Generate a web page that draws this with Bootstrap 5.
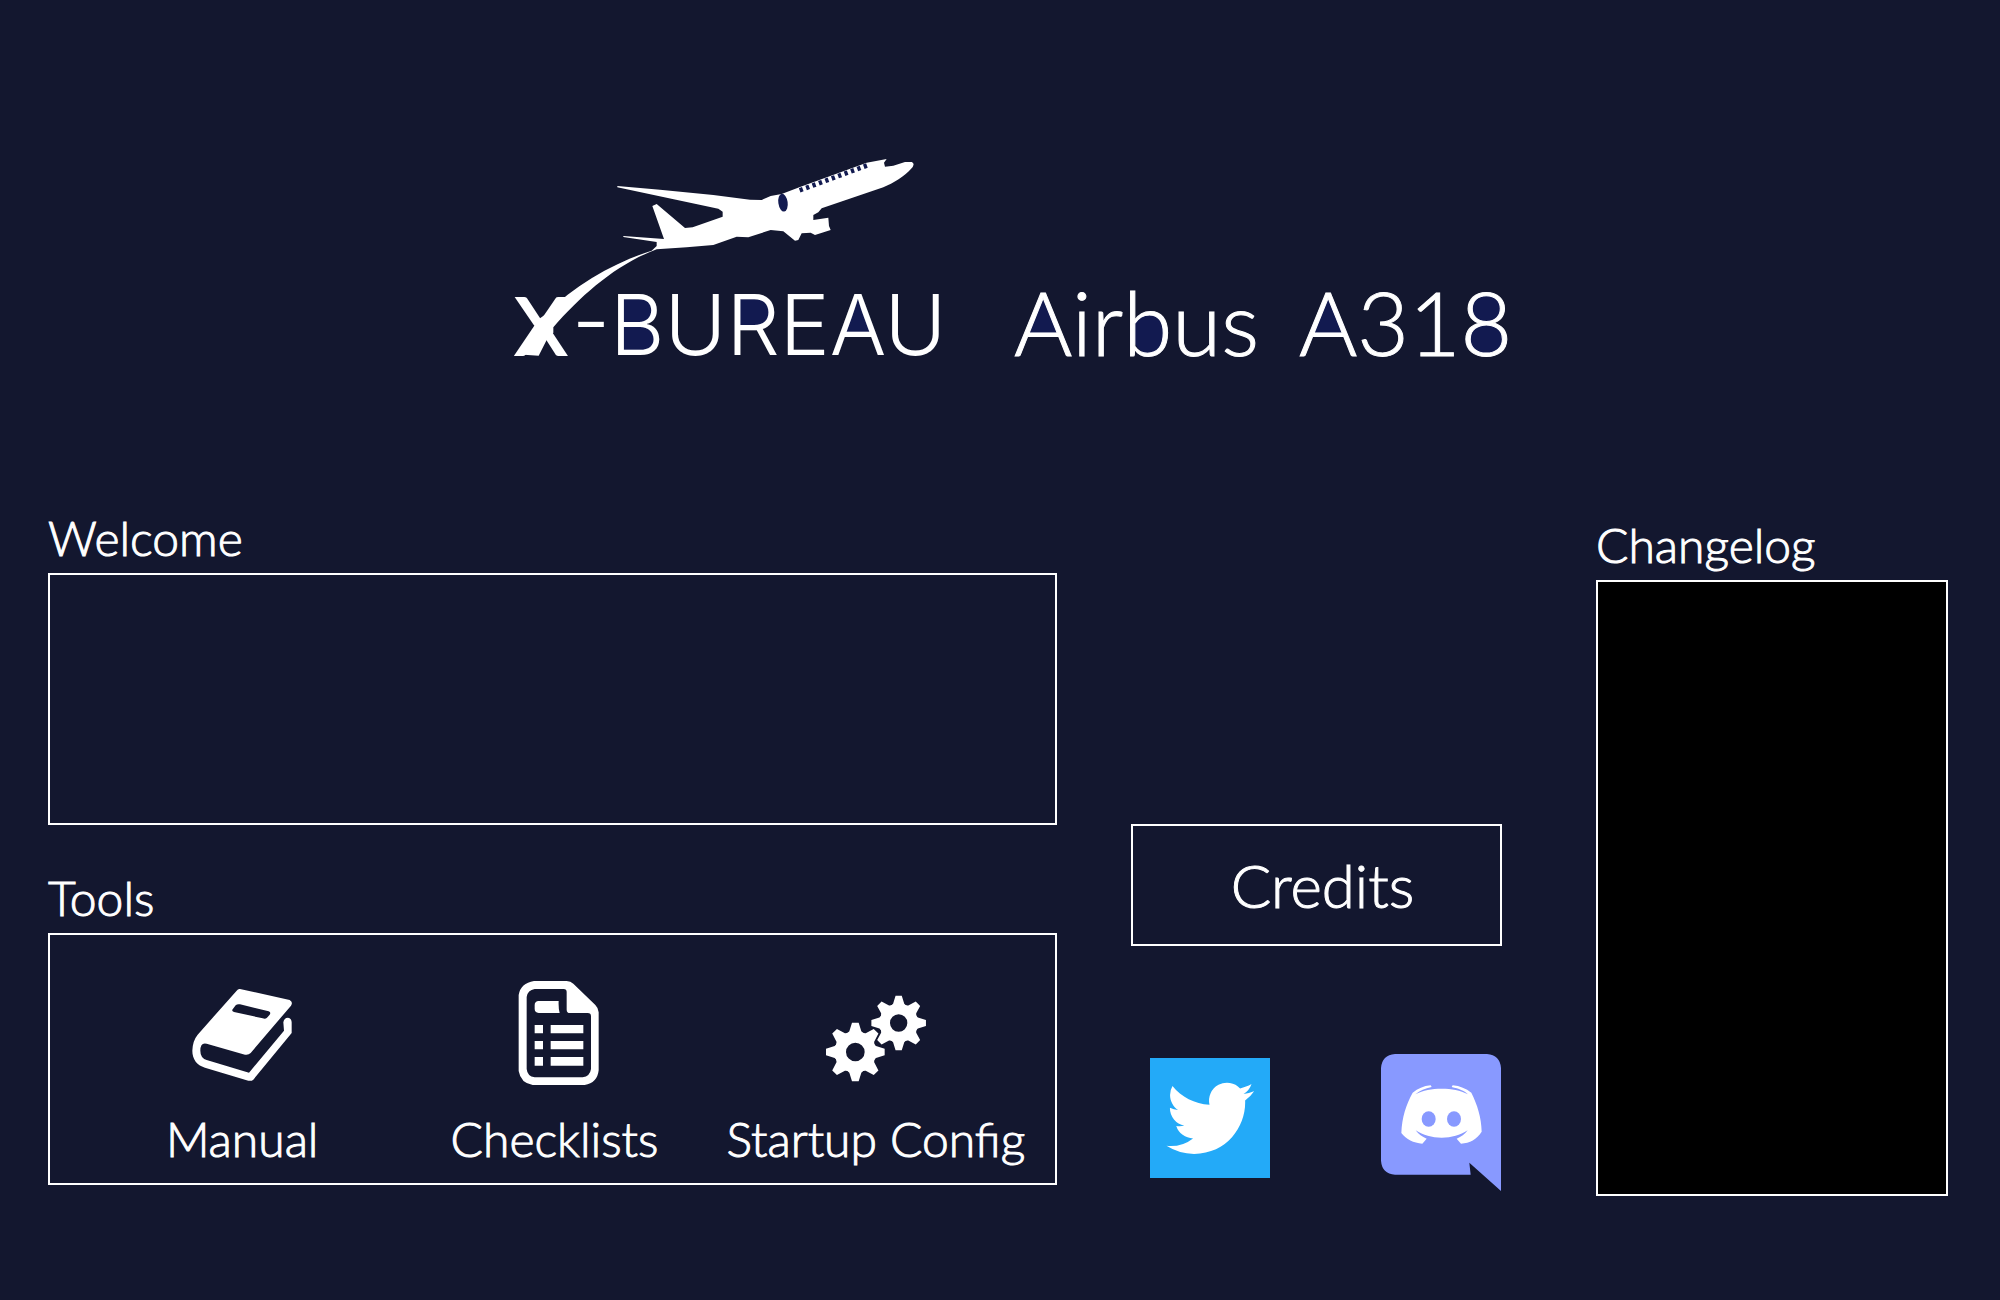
<!DOCTYPE html>
<html lang="en">
<head>
<meta charset="utf-8">
<meta name="viewport" content="width=device-width, initial-scale=1">
<title>X-BUREAU Airbus A318</title>
<link href="https://cdn.jsdelivr.net/npm/bootstrap@5.3.0/dist/css/bootstrap.min.css" rel="stylesheet">
<style>
  body { background: #13172f; color: #fff; font-family: Lato, "Open Sans", sans-serif; font-weight: 300; -webkit-text-stroke: 1px #fff; }
  .brand-art { width: 50%; margin-left: 28px; }
  .brand-head { padding: 150px 0 110px; }
  .brand-art text { fill: #fff; stroke: #fff; stroke-width: 1px; font-family: Lato, sans-serif; font-weight: 300; font-size: 89px; }
  .brand-art .wm { font-family: Inter, sans-serif; font-size: 84px; stroke-width: 0; }
  .brand-art .wx { font-weight: 400; font-size: 80px; stroke-width: 2px; }
  .dash { padding: 0 52px 48px 48px; }
  .col-work { flex: 1009 1 0; margin-right: 74px; }
  .col-links { flex: 371 1 0; margin-right: 94px; padding-top: 314px; }
  .col-log { flex: 352 1 0; padding-top: 7px; }
  .panel-title { font-size: 48px; line-height: 56px; font-weight: 300; margin: 0; padding-bottom: 7px; }
  .pane { border: 2px solid #fff; min-height: 252px; }
  .log-pane { background: #000; min-height: 616px; }
  .section-gap { margin-bottom: 45px; }
  .tools { display: grid; grid-template-columns: 338fr 286fr 356fr; padding: 0 1px 0 23px; }
  .tool { background: none; border: 0; color: #fff; font-size: 48px; line-height: 56px; font-weight: 300; padding: 44px 0 14px; white-space: nowrap; -webkit-text-stroke: 1px #fff; }
  .tool svg { height: 108px; width: 108px; margin-bottom: 24px; }
  .credits { background: none; border: 2px solid #fff; color: #fff; font-size: 60px; line-height: 118px; font-weight: 300; padding: 0 0 0 12px; -webkit-text-stroke: 1px #fff; }
  .socials { padding: 108px 1px 0 19px; }
</style>
<script src="https://cdn.jsdelivr.net/npm/bootstrap@5.3.0/dist/js/bootstrap.bundle.min.js"></script>
</head>
<body>
<header class="brand-head d-flex justify-content-center">
  <svg class="brand-art" viewBox="514 150 1000 250" role="img" aria-label="X-BUREAU Airbus A318">
    <g transform="translate(500 140) scale(.33333)">
      <path fill="#fff" d="M352 138 480 149 640 165 750 179 785 180 812 168 845 162 900 141 1100 68 1160 57 1152 68 1155 80 1180 77 1215 66 1235 66Q1248 72 1232 88C1215 108 1180 130 1150 142L965 205 955 217 940 225V240L985 233 987 258 992 270 945 285 932 278 905 280 895 300 885 302 850 274 812 270 745 292 710 290 640 315 560 322 470 328C350 372 245 464 160 562V578L140 600 116 647 50 643 105 570V545L135 524C230 430 350 365 455 332L470 318V306L370 291V288L492 297 457 198 470 192 555 264 578 262 668 230V215L655 206 352 142Z"/>
      <ellipse cx="849" cy="188" rx="14" ry="27" fill="#121a50" transform="rotate(-8 849 188)"/>
      <path d="M899 151 1108 74" stroke="#121a50" stroke-width="14" stroke-dasharray="10 10.500"/>
    </g>
    <g fill="#121a50">
      <path d="M621 297H643Q653 299 653 310T643 323H621ZM621 323H644Q656 326 656 337T644 352H621ZM738 297H757Q770 300 770 312T757 327H738ZM858 297 843 334H873ZM1043 297 1027 334H1058ZM1328 297 1313 334H1344Z"/>
      <ellipse cx="1149" cy="333" rx="16" ry="21"/>
      <ellipse cx="1486" cy="308" rx="15" ry="14"/>
      <ellipse cx="1486" cy="339" rx="17" ry="15"/>
    </g>
    <text class="wx" x="515" y="355">X</text>
    <text class="wm" x="572" y="355">-BUREAU</text>
    <text x="1014" y="356">Airbus</text>
    <text x="1299" y="356">A318</text>
  </svg>
</header>

<main class="dash d-flex">
  <div class="col-work">
    <section class="section-gap" aria-labelledby="t-welcome">
      <h2 class="panel-title" id="t-welcome">Welcome</h2>
      <div class="pane"></div>
    </section>
    <section aria-labelledby="t-tools">
      <h2 class="panel-title" id="t-tools">Tools</h2>
      <div class="pane tools">
        <button type="button" class="tool d-flex flex-column align-items-center">
          <svg viewBox="474 360 324 324" aria-hidden="true"><path fill="#fff" fill-rule="evenodd" d="M630 390 779 423Q790 429 783 440L662 582Q655 589 645 587L530 554Q511 549 511 575 511 597 530 603L657 641 762 515 760 490Q762 476 774 476 785 478 785 490V522L670 662Q664 667 655 665L525 626C500 618 487 600 487 575Q488 545 503 527L620 395Q624 389 630 390ZM607 452 617 439Q622 434 630 436L716 457Q724 460 719 467L711 476Q706 481 698 478L612 459Q605 457 607 452Z"/></svg>
          Manual
        </button>
        <button type="button" class="tool d-flex flex-column align-items-center">
          <svg viewBox="208 60 324 324" aria-hidden="true">
            <path fill="#fff" fill-rule="evenodd" d="M310 66H408Q420 66 428 74L494 138Q504 148 504 160V334Q500 372 462 378H306Q270 372 264 336V108Q270 72 310 66ZM312 90Q291 93 288 114V330Q290 352 312 355H456Q478 352 481 330V172Q481 162 471 162H418Q408 162 408 152V99Q408 90 399 90Z"/>
            <path fill="#fff" d="M324 126H384Q383 150 387 162H324Q312 160 312 150V138Q312 127 324 126ZM312 198h25v25h-25zM360 198h98v25h-98zM312 246h25v25h-25zM360 246h98v25h-98zM312 294h25v26h-25zM360 294h98v26h-98z"/>
          </svg>
          Checklists
        </button>
        <button type="button" class="tool d-flex flex-column align-items-center">
          <svg viewBox="360 58 324 324" aria-hidden="true">
            <defs><path id="tooth" d="M-27-53-18-62-10-88H10L18-62 27-53Z"/>
            <g id="gear"><circle r="45" fill="none" stroke="#fff" stroke-width="34"/><g fill="#fff"><use href="#tooth"/><use href="#tooth" transform="rotate(45)"/><use href="#tooth" transform="rotate(90)"/><use href="#tooth" transform="rotate(135)"/><use href="#tooth" transform="rotate(180)"/><use href="#tooth" transform="rotate(225)"/><use href="#tooth" transform="rotate(270)"/><use href="#tooth" transform="rotate(315)"/></g></g></defs>
            <use href="#gear" transform="translate(460 277)"/>
            <use href="#gear" transform="translate(590 190) scale(.93)"/>
          </svg>
          Startup Config
        </button>
      </div>
    </section>
  </div>

  <div class="col-links">
    <button type="button" class="credits w-100">Credits</button>
    <div class="socials d-flex justify-content-between align-items-start">
      <a href="#" class="d-block mt-1" aria-label="Twitter">
        <svg class="d-block" width="120" height="120" viewBox="0 0 120 120"><path fill="#23aaf8" d="M0 0h120v120H0z"/><path fill="#fff" transform="translate(16.500 16.500) scale(3.650)" d="M23.953 4.57a10 10 0 01-2.825.775 4.958 4.958 0 002.163-2.723c-.951.555-2.005.959-3.127 1.184a4.92 4.92 0 00-8.384 4.482C7.69 8.095 4.067 6.13 1.64 3.162a4.822 4.822 0 00-.666 2.475c0 1.71.87 3.213 2.188 4.096a4.904 4.904 0 01-2.228-.616v.06a4.923 4.923 0 003.946 4.827 4.996 4.996 0 01-2.212.085 4.936 4.936 0 004.604 3.417 9.867 9.867 0 01-6.102 2.105c-.39 0-.779-.023-1.17-.067a13.995 13.995 0 007.557 2.209c9.053 0 13.998-7.496 13.998-13.985 0-.21 0-.42-.015-.63A9.935 9.935 0 0024 4.59z"/></svg>
      </a>
      <a href="#" class="d-block" aria-label="Discord">
        <svg class="d-block" width="120" height="137" viewBox="63 42 360 411">
          <path fill="#8899ff" d="M105 42H381Q420 45 423 84V453L328 368 332 404H105Q66 401 63 362V84Q66 45 105 42Z"/>
          <path fill="#fff" d="M158 158C174 146 190 138 212 136L215 141C195 145 180 151 166 163 190 150 215 146 245 146 275 146 300 150 324 163 312 152 297 146 275 141L278 136C300 138 318 146 334 158 352 194 364 232 365 275 350 298 330 309 303 311L290 296C304 290 314 283 323 271 300 286 275 293 245 293 215 293 190 286 167 271 176 283 186 290 200 296L187 311C160 309 139 298 124 279 126 232 138 194 158 158Z"/>
          <ellipse cx="206" cy="237" rx="21" ry="23" fill="#8899ff"/><ellipse cx="282" cy="237" rx="21" ry="23" fill="#8899ff"/>
        </svg>
      </a>
    </div>
  </div>

  <section class="col-log" aria-labelledby="t-log">
    <h2 class="panel-title" id="t-log">Changelog</h2>
    <div class="pane log-pane"></div>
  </section>
</main>
</body>
</html>
